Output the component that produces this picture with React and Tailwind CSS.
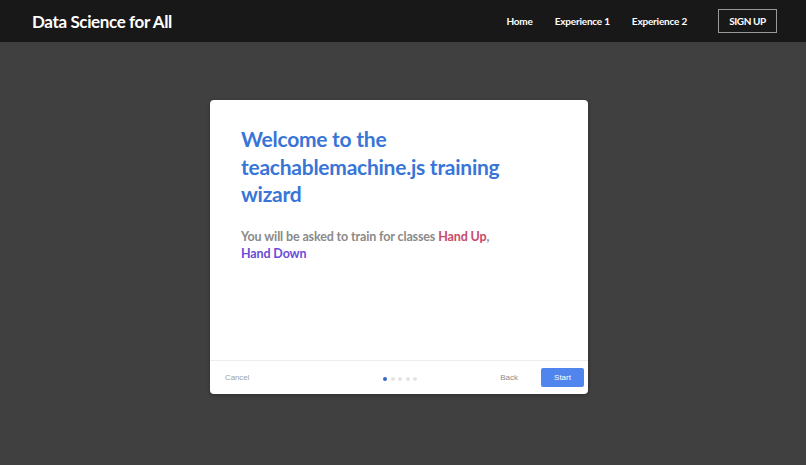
export default function App() {
  return (
    <div className="h-[465px] w-[806px] overflow-hidden bg-[#404040] flex flex-col font-['Lato','Noto_Sans',sans-serif]">
      <header className="h-[42px] bg-[#181818] flex items-center pl-8 pr-[29px] shrink-0">
        <div className="text-[17px] tracking-[-0.38px] font-bold text-white leading-none mt-[1px]">Data Science for All</div>
        <nav className="ml-auto flex items-center text-[10px] tracking-[-0.2px] font-bold text-white">
          <span className="mt-[1px]">Home</span>
          <span className="ml-[22px] mt-[1px]">Experience 1</span>
          <span className="ml-[22px] mt-[1px]">Experience 2</span>
          <span className="ml-[31px] w-[59px] h-6 border border-[#9a9a9a] flex items-center justify-center text-[10px] tracking-[-0.4px]">SIGN UP</span>
        </nav>
      </header>
      <main className="flex-1 pt-[58px] flex justify-center pr-[12px] pl-[4px]">
        <div className="w-[378px] h-[294px] bg-white rounded-[4px] flex flex-col shadow-[0_1px_4px_rgba(0,0,0,0.3)]">
          <div className="flex-1 pt-[25px] pl-[31px] pr-8">
            <h1 className="text-[21px] tracking-[-0.25px] leading-[27.5px] font-bold text-[#3875d7]">
              Welcome to the<br />teachablemachine.js training<br />wizard
            </h1>
            <p className="mt-[20px] text-[12.5px] tracking-[-0.13px] leading-[17.5px] font-bold text-[#8a8a8a]">
              You will be asked to train for classes <span className="text-[#c8496b]">Hand Up</span>,<br />
              <span className="text-[#6b4bd8]">Hand Down</span>
            </p>
          </div>
          <footer className="h-[34px] border-t border-[#ececec] flex items-center pl-[15px] pr-[4px] text-[8px] font-['Liberation_Sans',sans-serif]">
            <span className="text-[#a0a0a0] w-[158px] text-[7.8px]">Cancel</span>
            <div className="flex gap-[3.5px] items-center mt-[2px]">
              <span className="w-[4px] h-[4px] rounded-full bg-[#3a66c4]" />
              <span className="w-[4px] h-[4px] rounded-full bg-[#e4e4e8]" />
              <span className="w-[4px] h-[4px] rounded-full bg-[#e4e4e8]" />
              <span className="w-[4px] h-[4px] rounded-full bg-[#e4e4e8]" />
              <span className="w-[4px] h-[4px] rounded-full bg-[#e4e4e8]" />
            </div>
            <span className="ml-auto text-[#8c8c8c]">Back</span>
            <span className="ml-[23px] w-[43px] h-[19px] rounded-[2px] bg-[#4f85ec] text-white flex items-center justify-center">Start</span>
          </footer>
        </div>
      </main>
    </div>
  );
}
